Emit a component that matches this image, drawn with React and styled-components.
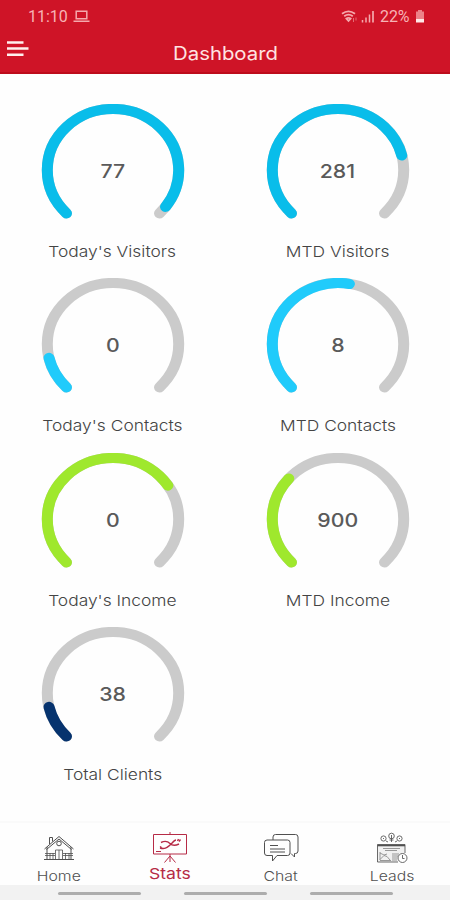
import React from "react";
import styled, { createGlobalStyle } from "styled-components";

const stats = [
  { label: "Today's Visitors", value: 77, fill: 0.97, color: "#09bdea" },
  { label: "MTD Visitors", value: 281, fill: 0.782, color: "#09bdea" },
  { label: "Today's Contacts", value: 0, fill: 0.118, color: "#20cbfb" },
  { label: "MTD Contacts", value: 8, fill: 0.537, color: "#20cbfb" },
  { label: "Today's Income", value: 0, fill: 0.71, color: "#9fe82d" },
  { label: "MTD Income", value: 900, fill: 0.32, color: "#9fe82d" },
  { label: "Total Clients", value: 38, fill: 0.118, color: "#06336e" },
];

const ARC = "M 25.5 117.5 A 65.7 65.7 0 1 1 118.5 117.5";

function Gauge({ label, value, fill, color }) {
  return (
    <GaugeStyled>
      <Dial>
        <svg width="144" height="118" viewBox="0 0 144 126.88" preserveAspectRatio="none">
          <path d={ARC} pathLength="100" stroke="#cbcbcb" />
          <path d={ARC} pathLength="100" stroke={color} strokeDasharray={`${fill * 100} 200`} />
        </svg>
        <Value>{value}</Value>
      </Dial>
      <Label>{label}</Label>
    </GaugeStyled>
  );
}

function HomeIcon() {
  return (
    <svg width="32" height="26" viewBox="0 0 32 26">
      <path d="M1.500 14 16 1.500 30.500 14M4 12v12.500M28 12v12.500M1 24.500h30M6.500 9V2.500h3v4M3.500 14.500 16 4l12.500 10.500" />
      <circle cx="16" cy="8.500" r="2.300" />
      <path d="M12.500 24V15h7v9M16 15v9M2 18.500h10M20 18.500h10M2 20.500h10M20 20.500h10M7 18v6M10 18v6M22.500 18v6M26 18v6" strokeWidth=".8" />
    </svg>
  );
}

function StatsIcon() {
  return (
    <svg width="36" height="32" viewBox="0 0 36 32">
      <path d="M1.500 2.500h33v19.500h-33zM18 0v2M18 22v8M18 24l-5.500 6.500M18 24l5.500 6.500M4 19.500h5" />
      <path d="M9 10.500c4-2 6.500-1.500 9 1s5 2.500 9 .500M8 16c5 1.500 7-.5 9.500-2.500S22 8 24 8M26.500 7l-1 2M28.500 7.500l-1.500 2M8 14.500l1.500 1" strokeWidth="1.400" />
    </svg>
  );
}

function ChatIcon() {
  return (
    <svg width="36" height="30" viewBox="0 0 36 30">
      <path d="M10 7V4q0-2.500 2.500-2.500h20Q35 1.500 35 4v14q0 2.500-2.500 2.500h-1V24L28 20.500" />
      <path d="M4 7h20.500Q27 7 27 9.500V20q0 2.500-2.500 2.500H14L9.500 28v-5.500H4Q1.500 22.500 1.500 20V9.500Q1.500 7 4 7z" />
      <path d="M7 12.500h8M7 16h15M7 19h15" />
    </svg>
  );
}

function LeadsIcon() {
  return (
    <svg width="32" height="32" viewBox="0 0 32 32" strokeWidth=".85">
      <circle cx="7.500" cy="6.500" r="2.600" />
      <circle cx="15.500" cy="4" r="2.800" />
      <circle cx="23.500" cy="6.500" r="2.600" />
      <path d="M7 6.500h1M15.500 3v7M13.500 8h4M23 6.500h1M10 9l2 1M19 10l2-1" />
      <path d="M29 21V12.500H1.500V30H22" fill="#f1f1f1" />
      <path d="M1.500 13.500H29" strokeWidth="1.600" />
      <path d="M7 16.500h17M9 18.500h12M4 20v8M4 27.500l4-4 3 1 3 3.500M4 21l4 2 3-1M16 22h7M16 24h6M16 26h5M16 28h5M4 28.500h11" stroke="#888" />
      <circle cx="26.500" cy="26" r="4.500" fill="#fff" />
      <path d="M26.500 23v3.500h2" />
    </svg>
  );
}

const tabs = [
  { name: "Home", icon: <HomeIcon /> },
  { name: "Stats", icon: <StatsIcon />, active: true },
  { name: "Chat", icon: <ChatIcon /> },
  { name: "Leads", icon: <LeadsIcon /> },
];

function App() {
  return (
    <>
      <GlobalStyle />
      <Screen>
        <Header>
          <StatusBar>
            <Clock>11:10</Clock>
            <svg width="17" height="13" viewBox="0 0 17 13">
              <path d="M3.200 1.200h10.600v7.600H3.200zM.5 11.300h16" fill="none" stroke="#f5a9ad" strokeWidth="1.500" />
            </svg>
            <StatusRight>
              <svg width="17" height="14" viewBox="0 0 17 14">
                <path d="M1 3.800Q7.500-1.200 14 3.800M3.200 6.300q4.300-3.200 8.600 0M5.400 8.600q2.100-1.500 4.200 0L7.500 11z" fill="none" stroke="#f5a9ad" strokeWidth="1.800" />
                <path d="M12.500 8v4M15 7.500v3" stroke="#e56b75" strokeWidth="1" />
              </svg>
              <svg width="14" height="13" viewBox="0 0 14 13">
                <path d="M1.500 10v2.500M5 7.500v5M8.500 4.500v8" stroke="#f5a9ad" strokeWidth="1.500" />
                <path d="M12 1v11.500" stroke="#f5a9ad" strokeWidth="1.700" />
              </svg>
              <Percent>22%</Percent>
              <svg width="10" height="13" viewBox="0 0 10 13">
                <path d="M3 0h4v1.500h2V9H1V1.500h2z" fill="#ed8289" />
                <path d="M1 9h8v3.500H1z" fill="#ffe9e7" />
              </svg>
            </StatusRight>
          </StatusBar>
          <TitleBar>
            <svg width="22" height="17" viewBox="0 0 22 17">
              <path d="M0 2.500h16.500M0 8.500h21.500M0 14.700h16.500" stroke="#fff0ee" strokeWidth="2.400" />
            </svg>
            <Title>Dashboard</Title>
          </TitleBar>
        </Header>
        <Grid>
          {stats.map((stat) => (
            <Gauge key={stat.label} {...stat} />
          ))}
        </Grid>
        <TabBar>
          {tabs.map((tab) => (
            <Tab key={tab.name} $active={tab.active}>
              <TabIcon>{tab.icon}</TabIcon>
              <TabName $active={tab.active}>{tab.name}</TabName>
            </Tab>
          ))}
        </TabBar>
        <GestureBar>
          <Handle />
          <Handle />
          <Handle />
        </GestureBar>
      </Screen>
    </>
  );
}

const GlobalStyle = createGlobalStyle`
  * {
    box-sizing: border-box;
  }
  body {
    margin: 0;
    background: #fefefe;
    font-family: Inter, "Open Sans", sans-serif;
  }
  svg {
    display: block;
  }
`;

const Screen = styled.div`
  display: flex;
  flex-direction: column;
  width: 450px;
  height: 900px;
  overflow: hidden;
`;

const Header = styled.header`
  height: 74px;
  background: #cf1427;
  border-bottom: 2px solid #bd0c1b;
`;

const StatusBar = styled.div`
  display: flex;
  align-items: center;
  height: 33px;
  padding: 0 25px 0 28px;
  color: #f7b3b5;
  font-family: Roboto, sans-serif;
  font-size: 16px;
`;

const Clock = styled.span`
  width: 45px;
`;

const StatusRight = styled.div`
  display: flex;
  align-items: center;
  gap: 3px;
  margin-left: auto;
`;

const Percent = styled.span`
  width: 31px;
  margin: 0 1px 0 2px;
  letter-spacing: -0.1px;
`;

const TitleBar = styled.div`
  display: grid;
  grid-template-columns: 22px 1fr 22px;
  align-items: start;
  height: 39px;
  padding: 7px 6px 0 7px;
`;

const Title = styled.h1`
  margin: 2px 0 0;
  color: #ffe3e2;
  font-size: 18px;
  font-weight: 400;
  line-height: 24px;
  text-align: center;
  transform: scaleX(1.13);
`;

const Grid = styled.main`
  display: grid;
  grid-template-columns: repeat(2, 225px);
  grid-auto-rows: 174.3px;
  align-content: start;
  height: 747px;
  padding-top: 30px;
`;

const GaugeStyled = styled.section`
  display: flex;
  flex-direction: column;
  align-items: center;
`;

const Dial = styled.div`
  display: grid;
  place-items: start center;
  height: 118px;
  > * {
    grid-area: 1 / 1;
  }
  path {
    fill: none;
    stroke-width: 11;
    stroke-linecap: round;
  }
`;

const Value = styled.span`
  margin-top: 55px;
  color: #5a5a5a;
  font-size: 18.5px;
  font-weight: 450;
  line-height: 24px;
  transform: scaleX(1.15);
`;

const Label = styled.span`
  margin-top: 20px;
  color: #444;
  font-size: 15px;
  font-weight: 300;
  line-height: 20px;
  white-space: nowrap;
  transform: scaleX(1.16);
`;

const TabBar = styled.nav`
  display: grid;
  grid-template-columns: repeat(4, 111.2px);
  height: 64px;
  padding-left: 3px;
  border-top: 2px solid #fafafa;
`;

const Tab = styled.div`
  display: flex;
  flex-direction: column;
  align-items: center;
  color: ${(props) => (props.$active ? "#b62b46" : "#505050")};
`;

const TabIcon = styled.div`
  display: flex;
  align-items: center;
  height: 32px;
  margin-top: 9px;
  svg {
    fill: none;
    stroke: currentColor;
  }
`;

const TabName = styled.span`
  margin-top: ${(props) => (props.$active ? "1px" : "3px")};
  font-size: ${(props) => (props.$active ? "15px" : "13.5px")};
  font-weight: ${(props) => (props.$active ? 400 : 300)};
  line-height: 18px;
  transform: scaleX(1.17);
`;

const GestureBar = styled.div`
  display: flex;
  justify-content: center;
  gap: 43px;
  height: 15px;
  padding-top: 7px;
  background: #f2f2f2;
`;

const Handle = styled.i`
  width: 83px;
  height: 3px;
  border-radius: 2px;
  background: #adadad;
`;

export default App;
